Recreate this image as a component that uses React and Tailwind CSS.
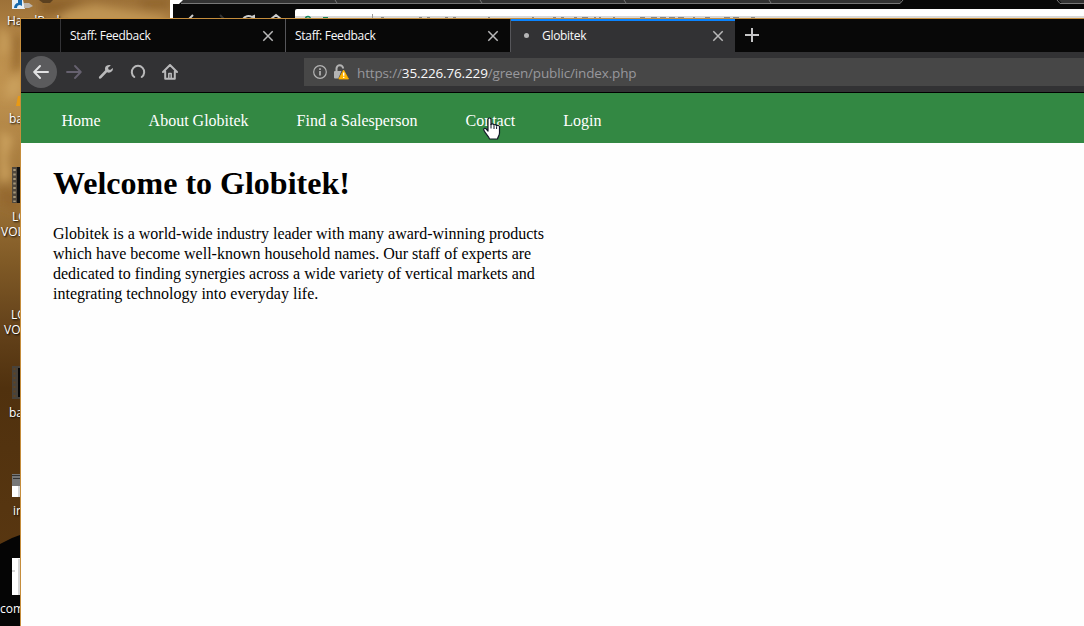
import React from "react";

const UI = "font-['Open_Sans','Noto_Sans',sans-serif]";

function CloseIcon() {
  return (
    <svg width="12" height="12" viewBox="0 0 12 12" className="shrink-0" fill="none" stroke="#b9b9ba" strokeWidth="1.5">
      <path d="M1.3 1.3 10.7 10.7M10.7 1.3 1.3 10.7" />
    </svg>
  );
}

function Tab({ title, active }) {
  return (
    <div
      className={
        active
          ? "flex h-full w-[224px] items-center border-t-2 border-[#0a84ff] bg-[#323234] pr-[11px] pl-[12px] pb-[2px]"
          : "flex h-full w-[225px] items-center border-r border-[#56565a] pr-[11px] pl-[9px] last-of-type:border-r-0"
      }
    >
      {active && <span className="mr-[13px] ml-px size-[5px] rounded-full bg-[#b5b5b6]" />}
      <span className="text-[12px] leading-4 font-medium tracking-[-0.3px] whitespace-nowrap text-[#f9f9fa]">{title}</span>
      <span className="ml-auto">
        <CloseIcon />
      </span>
    </div>
  );
}

function Toolbar() {
  return (
    <div className="flex h-[41px] shrink-0 items-center border-b border-black bg-[#323234] pl-[4px] text-[#b9b9ba]">
      <div className="flex size-8 shrink-0 items-center justify-center rounded-full bg-[#5b5b5d]">
        <svg width="16" height="16" viewBox="0 0 16 16" fill="none" stroke="#e2e2e3" strokeWidth="2" strokeLinecap="round" strokeLinejoin="round">
          <path d="M15 8H1.5M7 2 1.2 8 7 14" />
        </svg>
      </div>
      <svg className="ml-[9px] shrink-0" width="16" height="16" viewBox="0 0 16 16" fill="none" stroke="#66616f" strokeWidth="1.8" strokeLinecap="round" strokeLinejoin="round">
        <path d="M1 8H14.5M9 2 14.8 8 9 14" />
      </svg>
      <svg className="ml-[16px] shrink-0" width="16" height="16" viewBox="0 0 16 16" fill="currentColor">
        <path d="M14.9 4.1 12.1 6.1 10.300 5.2 10.2 3.4 12.8 1.4C10.5.5 7.7 1.4 7.1 3.8c-.2.9-.1 1.6.1 2.4L1.300 12.4c-.6.7-.5 1.5 0 2s1.300.5 1.900-.1L9 8.300c3.100 1.200 6.300-.7 5.900-4.200Z" />
      </svg>
      <svg className="ml-[16px] shrink-0" width="16" height="16" viewBox="0 0 16 16" fill="none" stroke="currentColor" strokeWidth="2" strokeLinecap="round">
        <path d="M4.300 13A6.200 6.200 0 1 1 11.700 13" />
      </svg>
      <svg className="ml-[16px] shrink-0" width="16" height="16" viewBox="0 0 16 16" fill="none" stroke="currentColor" strokeWidth="2" strokeLinecap="round" strokeLinejoin="round">
        <path d="M1 8 8 1l7 7M3.200 7.500v7.200h9.600V7.500" />
        <path d="M6.800 14V9.500h2.400V14" strokeWidth="1.500" />
      </svg>
      <div className="ml-[126px] flex h-7 flex-1 items-center bg-[#474747] pl-[9px]">
        <svg className="shrink-0" width="14" height="14" viewBox="0 0 14 14" fill="none" stroke="#b4b4b4" strokeWidth="1.200">
          <circle cx="7" cy="7" r="6.300" />
          <path d="M7 6v4.500M7 3.200v1.700" strokeWidth="1.700" />
        </svg>
        <svg className="ml-[7px] shrink-0" width="15" height="16" viewBox="0 0 15 16">
          <path d="M2.500 7V4.500a3.300 3.300 0 0 1 6.600 0" fill="none" stroke="#b4b4b4" strokeWidth="2" />
          <path d="M1 7h6.500L4.300 14.500H1a1 1 0 0 1-1-1V8a1 1 0 0 1 1-1Z" fill="#b4b4b4" />
          <path d="M9.600 6 14.500 15H4.800Z" fill="#ffb300" stroke="#ffb300" strokeWidth=".8" strokeLinejoin="round" />
          <path d="M9.700 8.500v3.200M9.700 12.700v1.300" stroke="#fff" strokeWidth="1.400" />
        </svg>
        <div className="mt-px ml-[8px] text-[13.500px] leading-5 tracking-[-0.150px] whitespace-nowrap text-[#98989d]">
          https://<span className="text-[#f9f9fa]">35.226.76.229</span>/green/public/index.php
        </div>
      </div>
    </div>
  );
}

function HandCursor() {
  return (
    <svg className="absolute top-[24px] left-[461px]" width="19" height="24" viewBox="0 0 19 24">
      <path
        d="M6 2.500c0-2 3-2 3 0v5c.4-1 2.700-.8 2.900.5.600-.8 2.500-.5 2.700.8.700-.8 2.900-.3 2.900 1V16c0 2.500-1.500 3.500-2 6H7.500C7 19.500 4 17.500 2 13.500c-1-2 .8-3 2.200-1.500L6 14Z"
        fill="#fff" stroke="#111827" strokeWidth="1.200" strokeLinejoin="round"
      />
      <path d="M9 7v4.500M12 8.500v3.500M14.600 9.500V12" stroke="#111827" strokeWidth="1" />
    </svg>
  );
}

function BackgroundBrowser() {
  return (
    <div className="absolute top-0 left-[170px] flex h-[19px] w-[914px] flex-col overflow-hidden border-l-[3px] border-white bg-[#080808]">
      <svg className="shrink-0" width="911" height="4" viewBox="0 0 911 4">
        <path d="M8 0h719q2 0 1 3.500H8ZM886 0h25v3.500h-22Z" fill="#323232" />
        <path d="M8 3.500H727L730 0M884 0l3 3.500h24M162 0l2 3M307 0l2 3M451 0l2 3M596 0l2 3" fill="none" stroke="#777" />
        <path d="M0 0h10L6 4H0Z" fill="#fff" />
      </svg>
      <div className="flex h-[15px] pt-[5px]">
        <svg className="shrink-0" width="122" height="10" viewBox="0 0 122 10" fill="none" stroke="#ccc" strokeWidth="2">
          <path d="m20 6-5 5M98 10l5-4 5 4M70 10a6 5 0 0 1 9-2l2-1v3" />
          <path d="m47 6 5 5" stroke="#333" />
        </svg>
        <div className="h-[10px] flex-1 overflow-hidden rounded-tl-[2px] bg-linear-to-b from-white from-70% to-[#d9d9d9] to-70%">
          <svg width="460" height="10" viewBox="0 0 460 10">
            <path d="M10.500 10a2.500 2.500 0 0 1 5 0" fill="none" stroke="#16825d" strokeWidth="1.500" />
            <path d="M28 8.500h5" stroke="#16825d" />
            <path d="M77.500 5v5" stroke="#999" />
            <path
              d="M86 8.500h3m35 0h3m5 0h3m15 0h3m5 0h3m32 0h2m42 0h2m19 0h3m5 0h3m10 0h3m5 0h6m6 0h2m3 0h2m12 0h2m25 0h5m6 0h6m3 0h6m3 0h6m3 0h6m9 0h2m10 0h5m14 0h6m3 0h6m12 0h8"
              stroke="#888"
            />
          </svg>
        </div>
      </div>
    </div>
  );
}

const labels = [
  ["HandBrake", "top-[13px] left-[7px]"],
  ["backup", "top-[111px] left-[9px]"],
  ["LOCAL", "top-[209px] left-[12px]"],
  ["VOLUME", "top-[224px] left-[1px]"],
  ["LOCAL", "top-[307px] left-[11px]"],
  ["VOLUME", "top-[322px] left-[4px]"],
  ["backup", "top-[405px] left-[9px]"],
  ["index", "top-[503px] left-[13px]"],
  ["commit", "top-[601px] left-[0px]"],
];

function Desktop() {
  return (
    <>
      <svg className="absolute top-0 left-0" width="170" height="626" viewBox="0 0 170 626">
        <defs>
          <linearGradient id="sand" x1="0" y1="0" x2="0" y2="1">
            <stop offset="0" stopColor="#9d7138" />
            <stop offset=".08" stopColor="#b98b49" />
            <stop offset=".14" stopColor="#c09350" />
            <stop offset=".3" stopColor="#a1763a" />
            <stop offset=".42" stopColor="#805a26" />
            <stop offset=".52" stopColor="#65431b" />
            <stop offset=".62" stopColor="#50310e" />
            <stop offset="1" stopColor="#5c3912" />
          </linearGradient>
          <filter id="soft"><feGaussianBlur stdDeviation="4" /></filter>
        </defs>
        <rect width="170" height="626" fill="url(#sand)" />
        <g filter="url(#soft)">
          <path d="M65 12 95 5l25 4 45 8v10H55Z" fill="#bf9452" />
          <path d="M40 0h45L65 12 40 15ZM135 0h35v7h-25Z" fill="#8d622c" />
          <path d="M0 25q15 15 4 30T0 75ZM8 80l12-5v18L5 100ZM0 130l13 8-6 20 4 20-11 5Z" fill="#caa05d" />
          <path d="M14 35h7v30l-8 10ZM0 185l20 10v18L0 205Z" fill="#94682f" />
        </g>
        <path d="M0 544 12 538 20 535V626H0Z" fill="#050505" />
        <path d="M12 0h11l2 9H12Z" fill="#e8f0f6" />
        <path d="M14 8c0-3 2-5 4-5V0h4v6l-2-1c-2 0-3 1-3 3Z" fill="#1769ac" />
        <path d="M24 3h5l4 3-4 2h-5" fill="#bdb6ad" />
        <path d="M39 0h14l-3 3h-7Z" fill="#5b401f" />
        <path d="M18 96h3v10h-5Z" fill="#e89a15" />
        <path d="M12 167h9v36h-9Z" fill="#51483d" />
        <path d="M17 167h4v36h-4Z" fill="#111" />
        <path d="M14.500 169v33" stroke="#a69678" strokeWidth="2.500" strokeDasharray="2 2.500" />
        <path d="M12 366h8v33h-8Z" fill="#49433b" />
        <path d="M18 368h2v29h-2Z" fill="#080808" />
        <path d="M14.500 368v30" stroke="#614522" strokeWidth="2" strokeDasharray="2 2.500" />
        <path d="M12 474h8v12h-8Z" fill="#777" />
        <path d="M12 475.500h8M13 478.500h7" stroke="#333" />
        <path d="M12 486h8v11h-8ZM12 558h8v37h-8Z" fill="#fff" />
        <path d="M19 486v11M19 559v36M12 571h3" stroke="#d5d5d5" strokeWidth="2" />
      </svg>
      {labels.map(([text, place], i) => (
        <span key={i} className={`absolute ${place} text-[12px] leading-4 whitespace-nowrap text-white [text-shadow:1px_1px_2px_#000]`}>
          {text}
        </span>
      ))}
    </>
  );
}

export default function App() {
  return (
    <div className={`relative h-[626px] w-[1084px] overflow-hidden bg-[#503010] ${UI}`}>
      <Desktop />
      <BackgroundBrowser />
      <div className="absolute top-[18px] left-[20px] flex h-[608px] w-[1064px] flex-col border-t border-l border-[#c58d3c] bg-[#fefefe]">
        <div className="flex h-[33px] shrink-0 bg-[#080808]">
          <div className="w-[40px] border-r border-[#333336]" />
          <Tab title="Staff: Feedback" />
          <Tab title="Staff: Feedback" />
          <Tab title="Globitek" active />
          <svg className="mt-[9px] ml-[10px]" width="14" height="14" viewBox="0 0 14 14" stroke="#c5c5c6" strokeWidth="2">
            <path d="M7 0v14M0 7h14" />
          </svg>
        </div>
        <Toolbar />
        <nav className="relative flex h-[50px] shrink-0 items-center gap-[48px] bg-[#338843] pt-[6px] pl-[40.500px] font-['Liberation_Serif',serif] text-[16px] whitespace-nowrap text-white">
          <a>Home</a>
          <a>About Globitek</a>
          <a>Find a Salesperson</a>
          <a>Contact</a>
          <a>Login</a>
          <HandCursor />
        </nav>
        <main className="pl-[32px] font-['Liberation_Serif',serif] text-black">
          <h1 className="mt-[22px] text-[32px] leading-[37px] font-bold whitespace-nowrap">Welcome to Globitek!</h1>
          <p className="mt-[22px] w-[500px] text-[16px] leading-5">
            Globitek is a world-wide industry leader with many award-winning products
            <br />
            which have become well-known household names. Our staff of experts are
            <br />
            dedicated to finding synergies across a wide variety of vertical markets and
            <br />
            integrating technology into everyday life.
          </p>
        </main>
      </div>
    </div>
  );
}
